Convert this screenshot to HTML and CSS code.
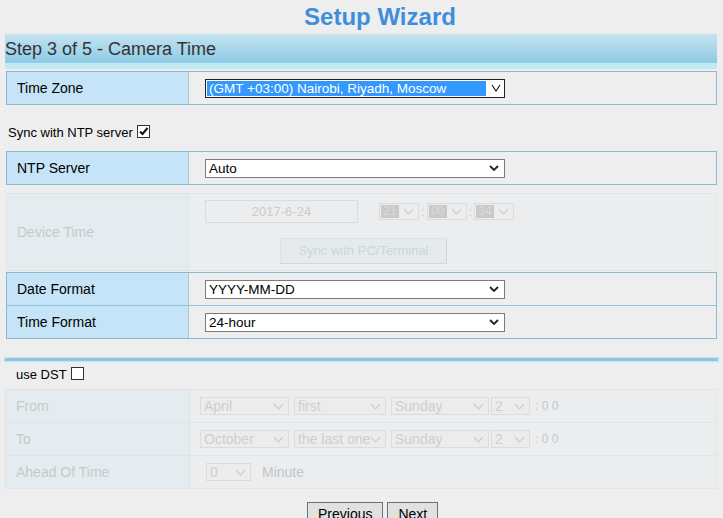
FILE: index.html
```html
<!DOCTYPE html>
<html lang="en">
<head>
    <meta charset="UTF-8">
    <meta name="viewport" content="width=device-width, initial-scale=1.0">
    <title>Setup Wizard</title>
    <link rel="stylesheet" href="styles.css">
</head>
<body>
    <div class="wizard">
        <h1 class="title">Setup Wizard</h1>
        <div class="step">Step 3 of 5 - Camera Time</div>
        <div class="step-shade"></div>

        <div class="form first">
            <div class="row">
                <div class="label">Time Zone</div>
                <div class="value">
                    <div class="select w300 focused">
                        <span class="picked">(GMT +03:00) Nairobi, Riyadh, Moscow</span>
                        <span class="drop"><svg class="arrow" viewBox="0 0 10 8"><path d="M1 1l4 6 4-6"/></svg></span>
                    </div>
                </div>
            </div>
        </div>

        <div class="check-line">Sync with NTP server <span class="check checked"><svg viewBox="0 0 11 11"><path d="M2 5.5l2.5 2.5 5-6"/></svg></span></div>

        <div class="form">
            <div class="row">
                <div class="label">NTP Server</div>
                <div class="value">
                    <div class="select w300"><span>Auto</span><svg class="arrow" viewBox="0 0 10 6"><path d="M1 1l4 4 4-4"/></svg></div>
                </div>
            </div>
        </div>

        <div class="form disabled device">
            <div class="row tall">
                <div class="label">Device Time</div>
                <div class="value stack">
                    <div class="time-line">
                        <div class="date-box">2017-6-24</div>
                        <div class="times">
                            <div class="mini"><span class="hl">21</span><svg class="arrow" viewBox="0 0 11 7"><path d="M1 1l4.5 5 4.5-5"/></svg></div>
                            <span class="colon">:</span>
                            <div class="mini"><span class="hl">00</span><svg class="arrow" viewBox="0 0 11 7"><path d="M1 1l4.5 5 4.5-5"/></svg></div>
                            <span class="colon">:</span>
                            <div class="mini"><span class="hl">34</span><svg class="arrow" viewBox="0 0 11 7"><path d="M1 1l4.5 5 4.5-5"/></svg></div>
                        </div>
                    </div>
                    <div class="sync-btn">Sync with PC/Terminal</div>
                </div>
            </div>
        </div>

        <div class="form formats">
            <div class="row">
                <div class="label">Date Format</div>
                <div class="value">
                    <div class="select w300"><span>YYYY-MM-DD</span><svg class="arrow" viewBox="0 0 10 6"><path d="M1 1l4 4 4-4"/></svg></div>
                </div>
            </div>
            <div class="row">
                <div class="label">Time Format</div>
                <div class="value">
                    <div class="select w300"><span>24-hour</span><svg class="arrow" viewBox="0 0 10 6"><path d="M1 1l4 4 4-4"/></svg></div>
                </div>
            </div>
        </div>

        <div class="divider"></div>

        <div class="check-line dst">use DST <span class="check"></span></div>

        <div class="form disabled dst-table">
            <div class="row">
                <div class="label">From</div>
                <div class="value tight">
                    <div class="select off w89"><span>April</span><svg class="arrow" viewBox="0 0 11 7"><path d="M1 1l4.5 5 4.5-5"/></svg></div>
                    <div class="select off w92"><span>first</span><svg class="arrow" viewBox="0 0 11 7"><path d="M1 1l4.5 5 4.5-5"/></svg></div>
                    <div class="select off w98"><span>Sunday</span><svg class="arrow" viewBox="0 0 11 7"><path d="M1 1l4.5 5 4.5-5"/></svg></div>
                    <div class="select off w39"><span>2</span><svg class="arrow" viewBox="0 0 11 7"><path d="M1 1l4.5 5 4.5-5"/></svg></div>
                    <span class="clock">: 0 0</span>
                </div>
            </div>
            <div class="row">
                <div class="label">To</div>
                <div class="value tight">
                    <div class="select off w89"><span>October</span><svg class="arrow" viewBox="0 0 11 7"><path d="M1 1l4.5 5 4.5-5"/></svg></div>
                    <div class="select off w92"><span>the last one</span><svg class="arrow" viewBox="0 0 11 7"><path d="M1 1l4.5 5 4.5-5"/></svg></div>
                    <div class="select off w98"><span>Sunday</span><svg class="arrow" viewBox="0 0 11 7"><path d="M1 1l4.5 5 4.5-5"/></svg></div>
                    <div class="select off w39"><span>2</span><svg class="arrow" viewBox="0 0 11 7"><path d="M1 1l4.5 5 4.5-5"/></svg></div>
                    <span class="clock">: 0 0</span>
                </div>
            </div>
            <div class="row">
                <div class="label">Ahead Of Time</div>
                <div class="value ahead">
                    <div class="select off w45"><span>0</span><svg class="arrow" viewBox="0 0 11 7"><path d="M1 1l4.5 5 4.5-5"/></svg></div>
                    <span class="unit">Minute</span>
                </div>
            </div>
        </div>

        <div class="actions">
            <button class="btn">Previous</button>
            <button class="btn">Next</button>
        </div>
    </div>
</body>
</html>
```

FILE: styles.css
```css
body {
    margin: 0;
    padding: 0;
    background-color: #eeeeee;
    font-family: 'Liberation Sans', Arial, sans-serif;
    color: #000;
    overflow: hidden;
}

.wizard {
    width: 712px;
    padding-left: 5px;
}

.title {
    margin: 0;
    height: 34px;
    line-height: 34px;
    padding-left: 38px;
    text-align: center;
    font-size: 24px;
    font-weight: bold;
    color: #3f8edb;
}

.step {
    height: 29px;
    line-height: 30px;
    font-size: 18px;
    color: #333;
    background: linear-gradient(#c4e3f0, #8dcbe6);
}

.step-shade {
    height: 6px;
    margin-bottom: 2px;
    background-color: #c3e9f5;
}

/* form tables */
.form {
    margin-left: 1px;
    border: 1px solid #8fb9ca;
}

.row {
    display: grid;
    grid-template-columns: 182px 1fr;
    height: 32px;
}

.row + .row {
    border-top: 1px solid #8fc3da;
}

.label {
    display: flex;
    align-items: center;
    padding-left: 10px;
    font-size: 14px;
    background-color: #c5e4f7;
    border-right: 1px solid #a3c9da;
}

.value {
    display: flex;
    align-items: center;
    padding-left: 16px;
}

.check-line {
    margin: 19px 0 9px 3px;
    font-size: 13px;
    line-height: 18px;
}

.check {
    display: inline-block;
    box-sizing: border-box;
    width: 13px;
    height: 13px;
    margin-left: 1px;
    border: 1px solid #333;
    background: #fff;
    vertical-align: -1px;
}

.check svg {
    display: block;
    width: 11px;
    height: 11px;
    fill: none;
    stroke: #111;
    stroke-width: 2;
}

/* selects */
.select {
    display: flex;
    align-items: center;
    justify-content: space-between;
    box-sizing: border-box;
    height: 19px;
    padding: 0 5px 0 3px;
    border: 1px solid #7a7a7a;
    background-color: #fff;
    font-size: 13.5px;
    white-space: nowrap;
}

.select span {
    overflow: hidden;
    min-width: 0;
}

.arrow {
    flex-shrink: 0;
    width: 10px;
    height: 6px;
    fill: none;
    stroke: #222;
    stroke-width: 1.8;
}

.w300 { width: 300px; }
.w89 { width: 89px; }
.w92 { width: 92px; }
.w98 { width: 98px; }
.w39 { width: 39px; }
.w45 { width: 45px; }

.select.focused {
    padding: 1px;
    border-color: #222;
}

.select.focused .picked {
    flex: 1;
    height: 15px;
    line-height: 15px;
    padding-left: 2px;
    background-color: #3399ff;
    color: #fff;
    margin-right: 2px;
}

.select.focused .drop {
    display: flex;
    align-items: center;
    justify-content: center;
    width: 15px;
    height: 15px;
}

.select.focused .arrow {
    width: 10px;
    height: 8px;
    stroke-width: 1.2;
}

/* disabled parts */
.form.disabled {
    border-color: #dfe6e9;
}

.form.disabled .label {
    background-color: #e4ecf0;
    border-right-color: #dbe4e8;
    color: #c6c9cb;
}

.form.disabled .row + .row {
    border-top-color: #dfe6e9;
}

.form.disabled .value {
    background-color: #ecedee;
}

.device {
    margin-top: 8px;
}

.row.tall {
    height: 76px;
}

.value.stack {
    flex-direction: column;
    align-items: flex-start;
    justify-content: flex-start;
    padding-top: 6px;
}

.time-line {
    display: flex;
    align-items: center;
    gap: 21px;
}

.date-box {
    box-sizing: border-box;
    width: 153px;
    height: 23px;
    line-height: 21px;
    border: 1px solid #d9dbdc;
    text-align: center;
    font-size: 13px;
    color: #cbcccd;
}

.times {
    display: flex;
    align-items: center;
    gap: 2px;
}

.mini {
    display: flex;
    align-items: center;
    box-sizing: border-box;
    width: 40px;
    height: 17px;
    padding: 1px 4px 1px 1px;
    border: 1px solid #dcdcdc;
    justify-content: space-between;
}

.mini .hl {
    width: 18px;
    height: 13px;
    line-height: 13px;
    font-size: 12px;
    text-align: center;
    background-color: #c9c9c9;
    color: #dadada;
}

.colon {
    font-size: 13px;
    color: #c9c9c9;
}

.select.off .arrow,
.mini .arrow {
    width: 11px;
    height: 7px;
    stroke: #cdd0d2;
    stroke-width: 1.3;
}

.sync-btn {
    box-sizing: border-box;
    width: 167px;
    height: 26px;
    margin: 15px 0 0 75px;
    line-height: 24px;
    text-align: center;
    font-size: 13px;
    color: #cfd5d7;
    background-color: #e5ebed;
    border: 1px solid #dde3e5;
    border-right-color: #d2d7d9;
    border-bottom-color: #d2d7d9;
}

.formats {
    margin-top: 1px;
}

.divider {
    height: 3px;
    margin: 19px 0 0 0;
    width: 713px;
    background-color: #8fc6e0;
    box-shadow: 0 0 1px 1px #c6e4f0;
}

.check-line.dst {
    margin: 5px 0 5px 11px;
}

.dst-table {
    margin-left: 0;
}

.dst-table .row {
    grid-template-columns: 184px 1fr;
}

.select.off {
    height: 18px;
    border-color: #dcdcdc;
    background-color: #ececec;
    color: #cdcfd0;
    font-size: 14px;
    padding-right: 4px;
}

.select.off span {
    margin-right: -6px;
}

.value.tight {
    padding-left: 10px;
    gap: 5px;
}

.value.tight .w39 {
    margin-left: -3px;
}

.clock {
    font-size: 12px;
    color: #c4c7c9;
}

.value.ahead {
    padding-left: 16px;
}

.unit {
    margin-left: 11px;
    font-size: 14px;
    color: #c2c5c7;
}

.actions {
    display: flex;
    gap: 4px;
    padding-left: 302px;
    margin-top: 13px;
}

.btn {
    height: 24px;
    padding: 0 10px;
    font-family: 'Liberation Sans', Arial, sans-serif;
    font-size: 14px;
    color: #000;
    background-color: #e1e1e1;
    border: 1px solid #707070;
    border-radius: 0;
}
```
